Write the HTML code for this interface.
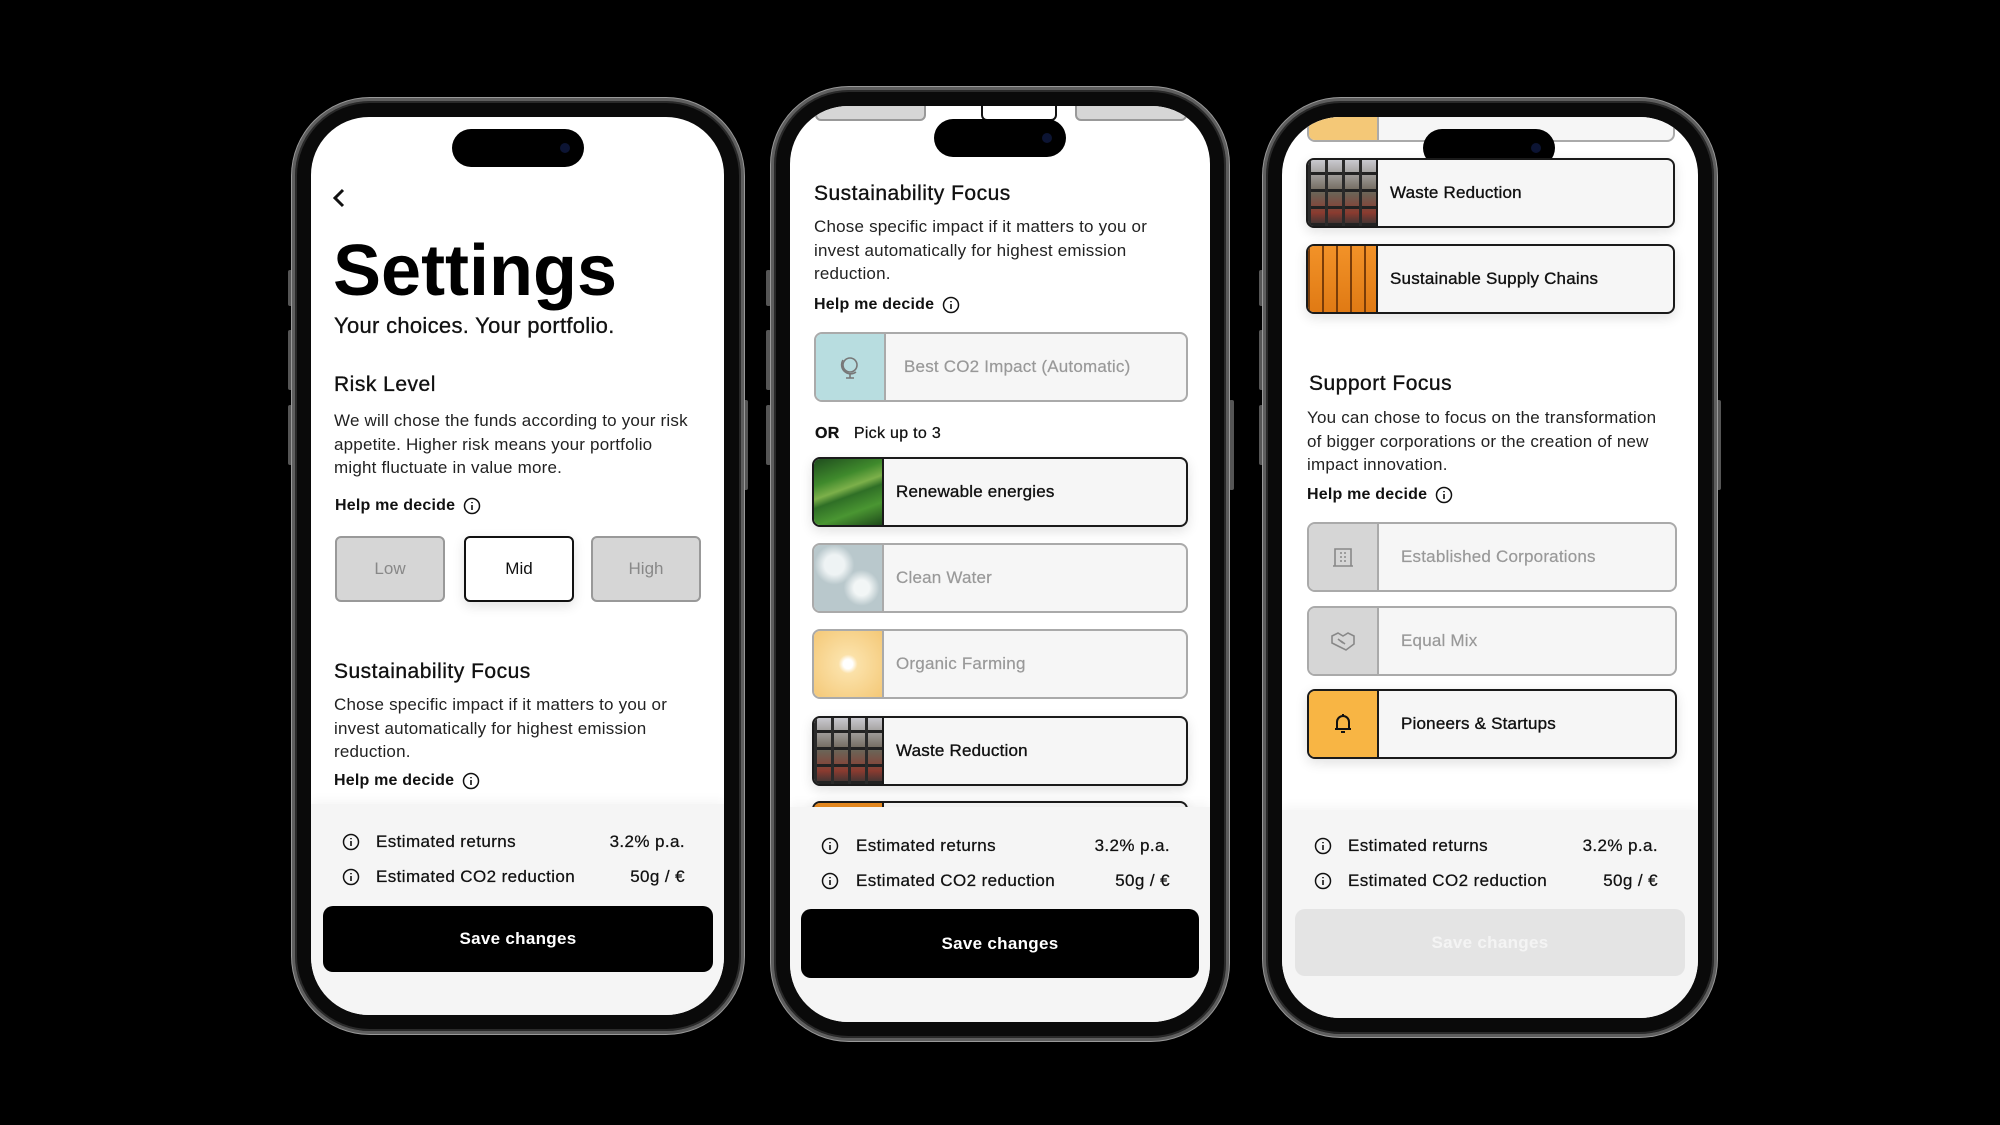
<!DOCTYPE html>
<html><head><meta charset="utf-8"><style>
*{margin:0;padding:0;box-sizing:border-box}
body{width:2000px;height:1125px;background:#000;position:relative;overflow:hidden;font-family:"Liberation Sans",sans-serif;color:#111}
.frame{position:absolute;border-radius:78px;background:#0a0a0a;border:3px solid #5e5e5e;box-shadow:inset 0 0 0 2px #2a2a2a, 0 0 0 1px #999}
.btn{position:absolute;width:5px;background:#555;border-radius:2px}
.screen{position:absolute;background:#fff;border-radius:58px;overflow:hidden}
.island{position:absolute;height:38px;width:132px;background:#000;border-radius:19px}
.island:after{content:"";position:absolute;right:14px;top:14px;width:10px;height:10px;border-radius:50%;background:#0c1433}
.t{position:absolute;white-space:nowrap}
.h{font-size:21px;-webkit-text-stroke:.35px #111;letter-spacing:.5px}
.p{font-size:17px;line-height:23.5px;color:#222;white-space:normal;letter-spacing:.2px}
.help{font-size:16px;font-weight:bold;display:flex;align-items:center;gap:8px;height:20px;letter-spacing:.2px}
.card{position:absolute;height:70px;border-radius:8px;border:2px solid #aaa;background:#f6f6f6;overflow:hidden}
.card.sel{border-color:#1a1a1a;box-shadow:0 4px 12px rgba(0,0,0,.12)}
.card .img{position:absolute;left:0;top:0;bottom:0;width:70px;border-right:2px solid #aaa;display:flex;align-items:center;justify-content:center}
.card.sel .img{border-right-color:#1a1a1a}
.card .lab{position:absolute;left:82px;top:0;bottom:0;display:flex;align-items:center;font-size:17px;color:#999;-webkit-text-stroke:.2px #999;letter-spacing:.2px}
.card.sel .lab{color:#111;-webkit-text-stroke:.35px #111}
.panel{position:absolute;left:0;right:0;bottom:0;background:#f5f5f5;box-shadow:0 -4px 10px rgba(0,0,0,.04)}
.row{position:absolute;font-size:17px;height:22px;line-height:22px;-webkit-text-stroke:.25px #111;letter-spacing:.4px}
.save{position:absolute;border-radius:10px;background:#000;color:#fff;font-size:17px;font-weight:bold;display:flex;align-items:center;justify-content:center;letter-spacing:.3px}
.rb{position:absolute;top:419px;height:66px;width:110px;border-radius:6px;border:2px solid #999;background:#d6d6d6;color:#888;font-size:17px;display:flex;align-items:center;justify-content:center}
</style></head><body>

<!-- PHONE 1 -->
<div class="btn" style="left:288px;top:270px;height:36px"></div>
<div class="btn" style="left:288px;top:330px;height:60px"></div>
<div class="btn" style="left:288px;top:405px;height:60px"></div>
<div class="btn" style="left:743px;top:400px;height:90px"></div>
<div class="frame" style="left:292px;top:98px;width:452px;height:936px"></div>
<div class="screen" style="left:311px;top:117px;width:413px;height:898px">
  <div class="island" style="left:141px;top:12px"></div>
  <svg class="t" style="left:18px;top:70px" width="20" height="22" viewBox="0 0 20 22"><path d="M14 3 L6 11 L14 19" fill="none" stroke="#111" stroke-width="3"/></svg>
  <div class="t" style="left:22px;top:118px;font-size:72px;font-weight:bold;line-height:72px;color:#000">Settings</div>
  <div class="t" style="left:23px;top:196px;font-size:22px;line-height:26px;-webkit-text-stroke:.3px #111;letter-spacing:.3px">Your choices. Your portfolio.</div>
  <div class="t h" style="left:23px;top:256px;line-height:24px">Risk Level</div>
  <div class="t p" style="left:23px;top:292px;width:360px">We will chose the funds according to your risk appetite. Higher risk means your portfolio might fluctuate in value more.</div>
  <div class="t help" style="left:24px;top:379px">Help me decide <svg width="18" height="18" viewBox="0 0 18 18"><circle cx="9" cy="9" r="7.5" fill="none" stroke="#111" stroke-width="1.5"/><path d="M9 8v5M9 5v1.2" stroke="#111" stroke-width="1.6"/></svg></div>
  <div class="rb" style="left:24px">Low</div>
  <div class="rb" style="left:153px;background:#fff;border-color:#111;color:#111;box-shadow:0 4px 12px rgba(0,0,0,.12)">Mid</div>
  <div class="rb" style="left:280px">High</div>
  <div class="t h" style="left:23px;top:543px;line-height:24px">Sustainability Focus</div>
  <div class="t p" style="left:23px;top:576px;width:360px">Chose specific impact if it matters to you or invest automatically for highest emission reduction.</div>
  <div class="t help" style="left:23px;top:654px">Help me decide <svg width="18" height="18" viewBox="0 0 18 18"><circle cx="9" cy="9" r="7.5" fill="none" stroke="#111" stroke-width="1.5"/><path d="M9 8v5M9 5v1.2" stroke="#111" stroke-width="1.6"/></svg></div>
  <div class="panel" style="top:687px">
    <svg class="t" style="left:31px;top:29px" width="18" height="18" viewBox="0 0 18 18"><circle cx="9" cy="9" r="7.5" fill="none" stroke="#111" stroke-width="1.5"/><path d="M9 8v5M9 5v1.2" stroke="#111" stroke-width="1.6"/></svg>
    <div class="row" style="left:65px;top:27px">Estimated returns</div>
    <div class="row" style="right:39px;top:27px">3.2% p.a.</div>
    <svg class="t" style="left:31px;top:64px" width="18" height="18" viewBox="0 0 18 18"><circle cx="9" cy="9" r="7.5" fill="none" stroke="#111" stroke-width="1.5"/><path d="M9 8v5M9 5v1.2" stroke="#111" stroke-width="1.6"/></svg>
    <div class="row" style="left:65px;top:62px">Estimated CO2 reduction</div>
    <div class="row" style="right:39px;top:62px">50g / €</div>
    <div class="save" style="left:12px;width:390px;top:102px;height:66px">Save changes</div>
  </div>
</div>

<!-- PHONE 2 -->
<div class="btn" style="left:766px;top:270px;height:36px"></div>
<div class="btn" style="left:766px;top:330px;height:60px"></div>
<div class="btn" style="left:766px;top:405px;height:60px"></div>
<div class="btn" style="left:1229px;top:400px;height:90px"></div>
<div class="frame" style="left:771px;top:87px;width:458px;height:954px"></div>
<div class="screen" style="left:790px;top:106px;width:420px;height:916px">
  <div style="position:absolute;left:25px;top:-50px;width:111px;height:65px;border:2px solid #999;background:#d6d6d6;border-radius:6px"></div>
  <div style="position:absolute;left:191px;top:-50px;width:76px;height:65px;border:2px solid #111;background:#fff;border-radius:6px"></div>
  <div style="position:absolute;left:285px;top:-50px;width:112px;height:65px;border:2px solid #999;background:#d6d6d6;border-radius:6px"></div>
  <div class="island" style="left:144px;top:13px"></div>
  <div class="t h" style="left:24px;top:76px;line-height:24px">Sustainability Focus</div>
  <div class="t p" style="left:24px;top:109px;width:360px">Chose specific impact if it matters to you or invest automatically for highest emission reduction.</div>
  <div class="t help" style="left:24px;top:189px">Help me decide <svg width="18" height="18" viewBox="0 0 18 18"><circle cx="9" cy="9" r="7.5" fill="none" stroke="#111" stroke-width="1.5"/><path d="M9 8v5M9 5v1.2" stroke="#111" stroke-width="1.6"/></svg></div>
  <div class="card" style="left:24px;top:226px;width:374px">
    <div class="img" style="background:#b8dde0"><svg width="26" height="26" viewBox="0 0 26 26" fill="none" stroke="#777" stroke-width="1.6"><circle cx="13" cy="11" r="7"/><path d="M6 6a9 9 0 0 0 13 12M13 20v4M9 24h8"/></svg></div>
    <div class="lab" style="left:88px">Best CO2 Impact (Automatic)</div>
  </div>
  <div class="t" style="left:25px;top:317px;font-size:16px;line-height:22px;-webkit-text-stroke:.25px #111;letter-spacing:.3px"><b>OR</b>&nbsp;&nbsp; Pick up to 3</div>
  <div class="card sel" style="left:22px;top:351px;width:376px">
    <div class="img" style="background:linear-gradient(160deg,#1f4d1e 0%,#3f8a2c 30%,#7cb04a 45%,#2f6f26 55%,#4a9632 75%,#1e4a1a 100%)"></div>
    <div class="lab">Renewable energies</div>
  </div>
  <div class="card" style="left:22px;top:437px;width:376px">
    <div class="img" style="background:radial-gradient(circle at 30% 30%,#eef3f4 0 15%,transparent 30%),radial-gradient(circle at 70% 65%,#f2f6f6 0 12%,transparent 28%),#b9c8cc"></div>
    <div class="lab">Clean Water</div>
  </div>
  <div class="card" style="left:22px;top:523px;width:376px">
    <div class="img" style="background:radial-gradient(circle at 50% 50%,#fff 0 10%,#fbe1a8 20%,#f4c877 100%)"></div>
    <div class="lab">Organic Farming</div>
  </div>
  <div class="card sel" style="left:22px;top:610px;width:376px">
    <div class="img" style="background:repeating-linear-gradient(90deg,#2a2a2a 0 3px,transparent 3px 17px),repeating-linear-gradient(0deg,#222 0 3px,transparent 3px 17px),linear-gradient(180deg,#c9c9cf,#6b6356 50%,#8a3b30 80%,#333)"></div>
    <div class="lab">Waste Reduction</div>
  </div>
  <div class="card sel" style="left:22px;top:695px;width:376px">
    <div class="img" style="background:#e88a1f"></div>
  </div>
  <div class="panel" style="top:701px">
    <svg class="t" style="left:31px;top:30px" width="18" height="18" viewBox="0 0 18 18"><circle cx="9" cy="9" r="7.5" fill="none" stroke="#111" stroke-width="1.5"/><path d="M9 8v5M9 5v1.2" stroke="#111" stroke-width="1.6"/></svg>
    <div class="row" style="left:66px;top:28px">Estimated returns</div>
    <div class="row" style="right:40px;top:28px">3.2% p.a.</div>
    <svg class="t" style="left:31px;top:65px" width="18" height="18" viewBox="0 0 18 18"><circle cx="9" cy="9" r="7.5" fill="none" stroke="#111" stroke-width="1.5"/><path d="M9 8v5M9 5v1.2" stroke="#111" stroke-width="1.6"/></svg>
    <div class="row" style="left:66px;top:63px">Estimated CO2 reduction</div>
    <div class="row" style="right:40px;top:63px">50g / €</div>
    <div class="save" style="left:11px;width:398px;top:102px;height:69px">Save changes</div>
  </div>
</div>

<!-- PHONE 3 -->
<div class="btn" style="left:1259px;top:270px;height:36px"></div>
<div class="btn" style="left:1259px;top:330px;height:60px"></div>
<div class="btn" style="left:1259px;top:405px;height:60px"></div>
<div class="btn" style="left:1716px;top:400px;height:90px"></div>
<div class="frame" style="left:1263px;top:98px;width:454px;height:939px"></div>
<div class="screen" style="left:1282px;top:117px;width:416px;height:901px">
  <div class="card" style="left:25px;top:-45px;width:368px">
    <div class="img" style="background:#f4c877"></div>
  </div>
  <div class="island" style="left:141px;top:12px"></div>
  <div class="card sel" style="left:24px;top:41px;width:369px">
    <div class="img" style="background:repeating-linear-gradient(90deg,#2a2a2a 0 3px,transparent 3px 17px),repeating-linear-gradient(0deg,#222 0 3px,transparent 3px 17px),linear-gradient(180deg,#c9c9cf,#6b6356 50%,#8a3b30 80%,#333)"></div>
    <div class="lab">Waste Reduction</div>
  </div>
  <div class="card sel" style="left:24px;top:127px;width:369px">
    <div class="img" style="background:repeating-linear-gradient(90deg,#7a3c08 0 2px,transparent 2px 14px),linear-gradient(180deg,#f29228,#e07a14)"></div>
    <div class="lab">Sustainable Supply Chains</div>
  </div>
  <div class="t h" style="left:27px;top:255px;line-height:24px">Support Focus</div>
  <div class="t p" style="left:25px;top:289px;width:365px">You can chose to focus on the transformation of bigger corporations or the creation of new impact innovation.</div>
  <div class="t help" style="left:25px;top:368px">Help me decide <svg width="18" height="18" viewBox="0 0 18 18"><circle cx="9" cy="9" r="7.5" fill="none" stroke="#111" stroke-width="1.5"/><path d="M9 8v5M9 5v1.2" stroke="#111" stroke-width="1.6"/></svg></div>
  <div class="card" style="left:25px;top:405px;width:370px">
    <div class="img" style="background:#d6d6d6"><svg width="24" height="22" viewBox="0 0 24 22" fill="none" stroke="#888" stroke-width="1.6"><path d="M4 20V3h16v17M2 20h20M9 7h2M13 7h2M9 11h2M13 11h2M9 15h2M13 15h2"/></svg></div>
    <div class="lab" style="left:92px">Established Corporations</div>
  </div>
  <div class="card" style="left:25px;top:489px;width:370px">
    <div class="img" style="background:#d6d6d6"><svg width="26" height="22" viewBox="0 0 26 22" fill="none" stroke="#888" stroke-width="1.6"><path d="M2 6l6-3 5 3 5-3 6 3v8l-8 6-8-4-6-3z"/><path d="M8 9l5 4M11 11l4 3"/></svg></div>
    <div class="lab" style="left:92px">Equal Mix</div>
  </div>
  <div class="card sel" style="left:25px;top:572px;width:370px">
    <div class="img" style="background:#f8b544"><svg width="22" height="24" viewBox="0 0 22 24" fill="none" stroke="#111" stroke-width="2"><path d="M5 17V10a6 6 0 0 1 12 0v7M3 17h16M9 20h4M11 2v2"/></svg></div>
    <div class="lab" style="left:92px">Pioneers &amp; Startups</div>
  </div>
  <div class="panel" style="top:693px">
    <svg class="t" style="left:32px;top:27px" width="18" height="18" viewBox="0 0 18 18"><circle cx="9" cy="9" r="7.5" fill="none" stroke="#111" stroke-width="1.5"/><path d="M9 8v5M9 5v1.2" stroke="#111" stroke-width="1.6"/></svg>
    <div class="row" style="left:66px;top:25px">Estimated returns</div>
    <div class="row" style="right:40px;top:25px">3.2% p.a.</div>
    <svg class="t" style="left:32px;top:62px" width="18" height="18" viewBox="0 0 18 18"><circle cx="9" cy="9" r="7.5" fill="none" stroke="#111" stroke-width="1.5"/><path d="M9 8v5M9 5v1.2" stroke="#111" stroke-width="1.6"/></svg>
    <div class="row" style="left:66px;top:60px">Estimated CO2 reduction</div>
    <div class="row" style="right:40px;top:60px">50g / €</div>
    <div class="save" style="left:13px;width:390px;top:99px;height:67px;background:#e4e4e4;color:#f4f4f4">Save changes</div>
  </div>
</div>
</body></html>
